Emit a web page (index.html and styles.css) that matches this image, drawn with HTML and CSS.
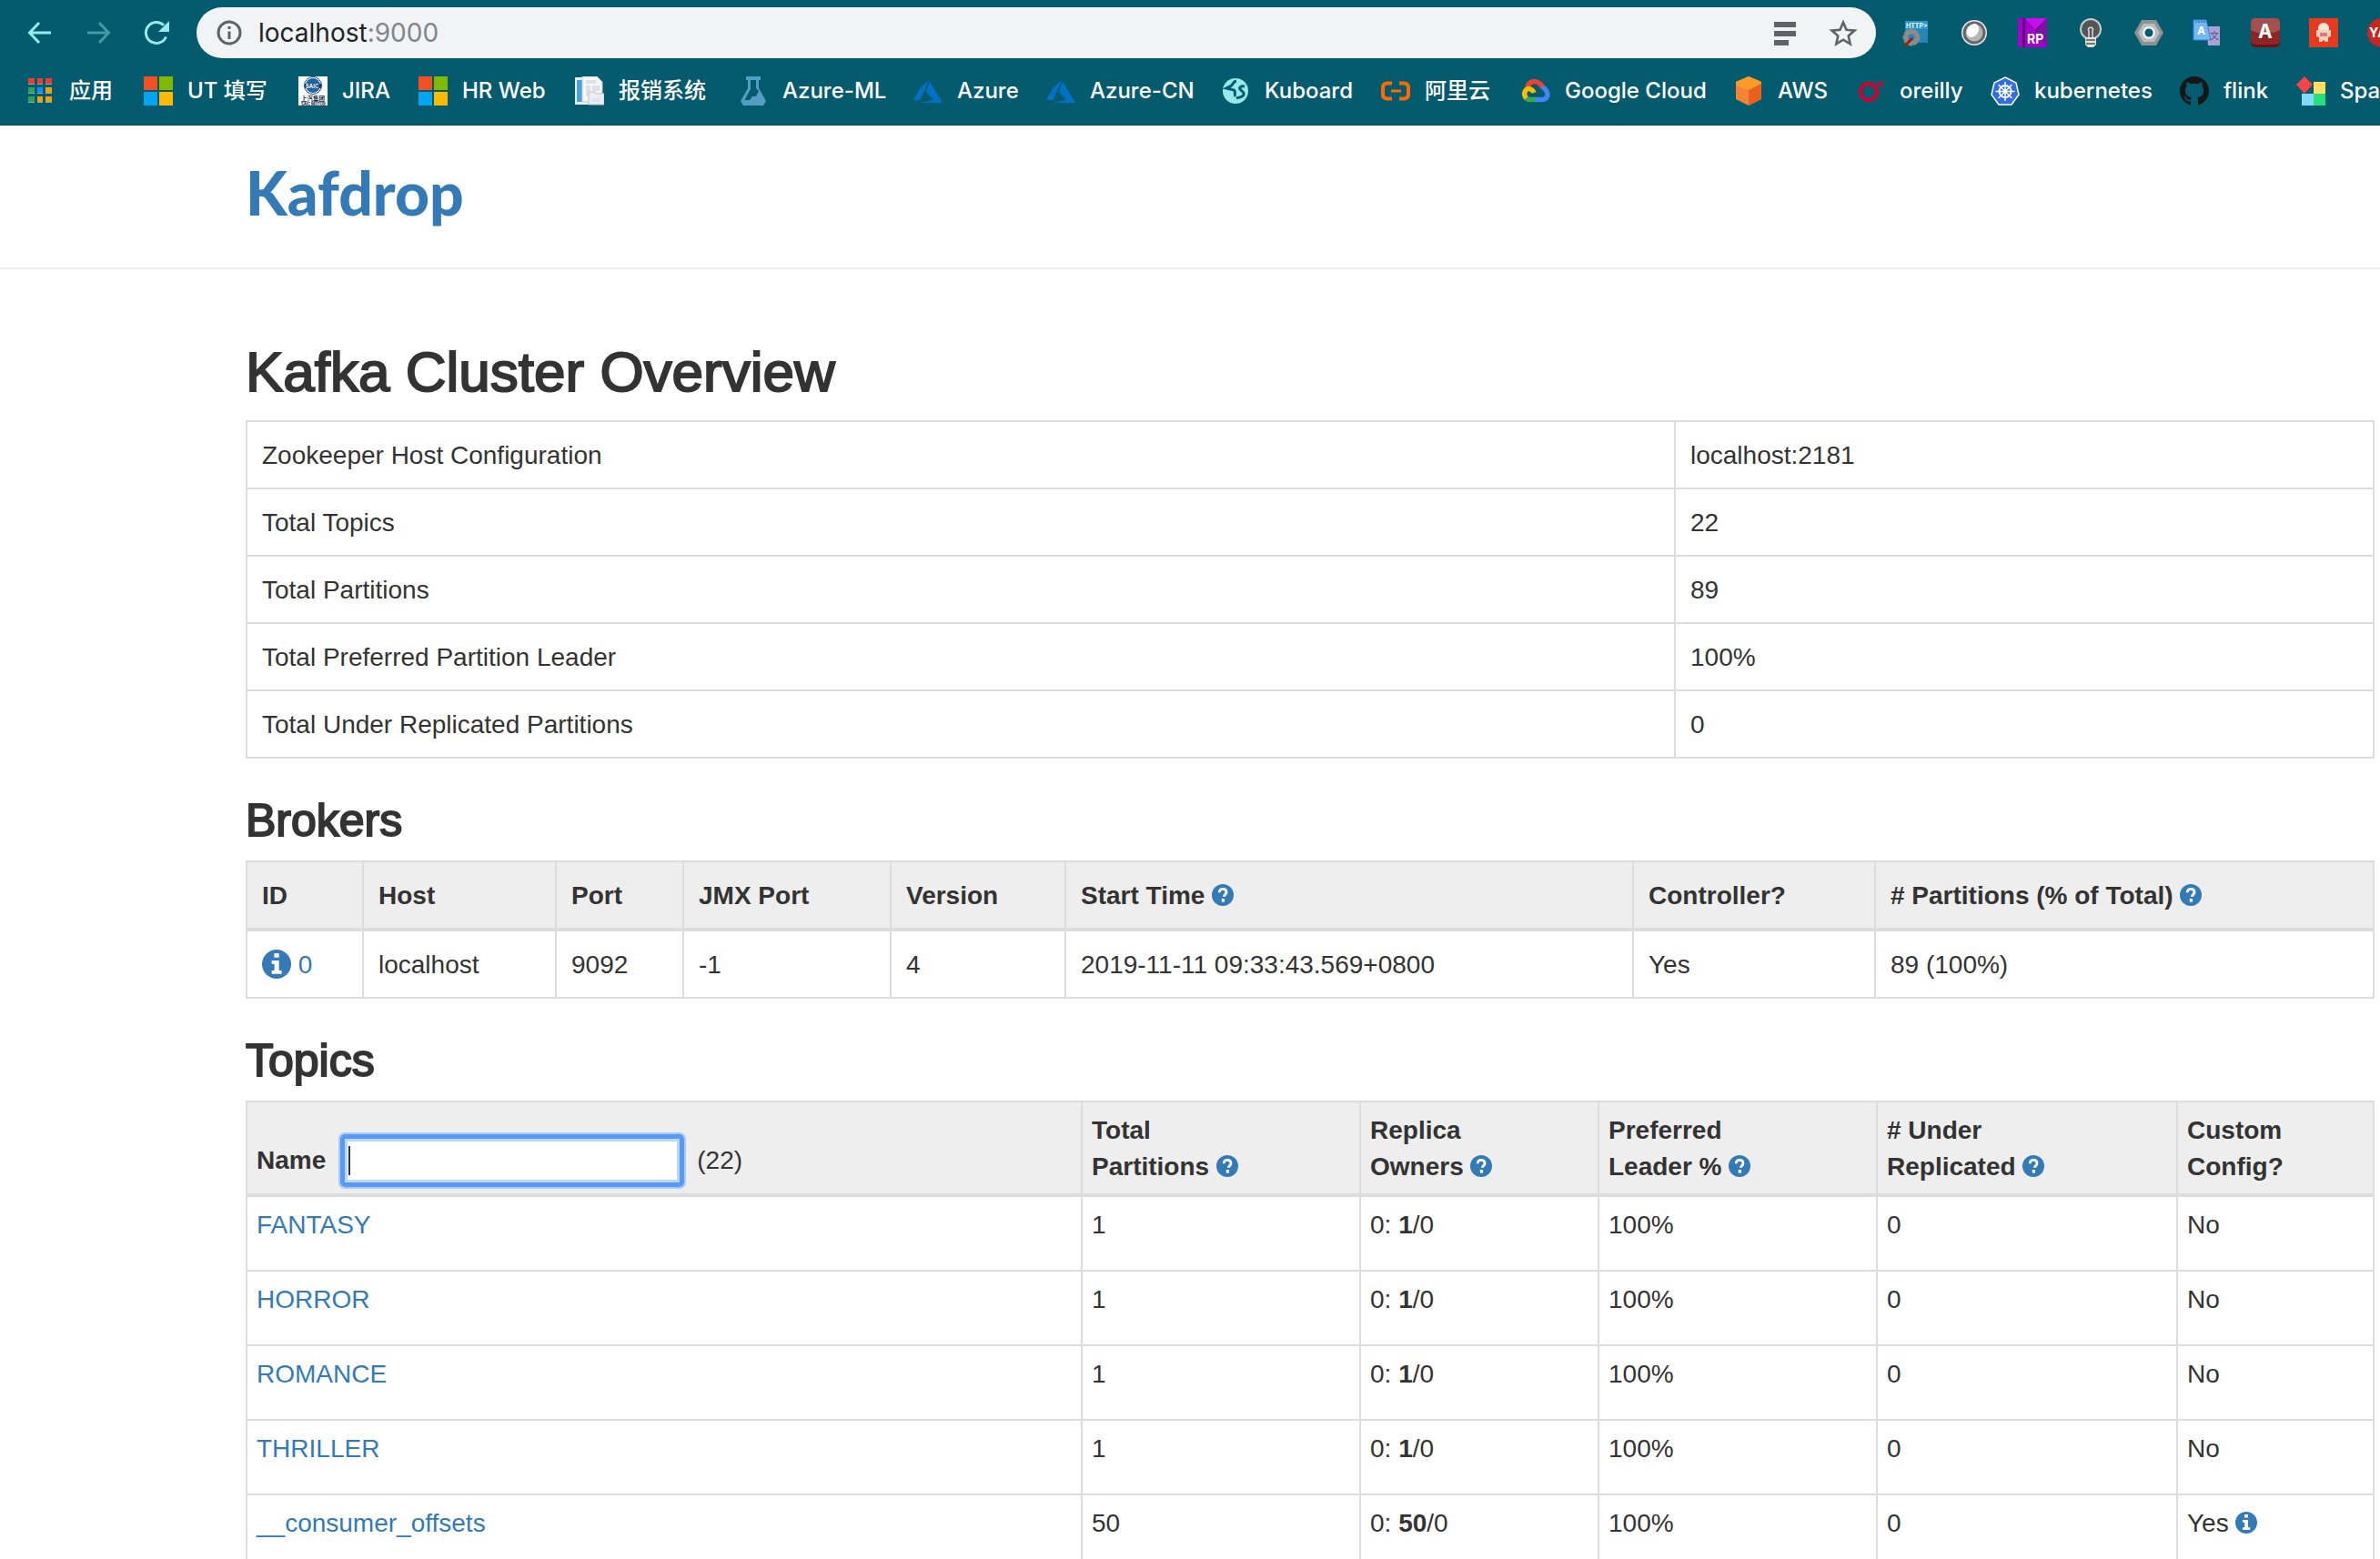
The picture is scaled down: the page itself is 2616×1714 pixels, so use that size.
FILE: index.html
```html
<!DOCTYPE html>
<html lang="en">
<head>
<meta charset="utf-8">
<title>Kafdrop: Broker List</title>
<link rel="stylesheet" href="styles.css">
</head>
<body>
<svg class="defs" aria-hidden="true">
  <symbol id="question" viewBox="0 0 24 24">
    <circle cx="12" cy="12" r="12" fill="#337ab7"/>
    <path d="M8.2 9.2C8.2 6.6 9.8 5.4 12 5.4s4 1.3 4 3.5c0 2.700-2.600 2.700-2.600 4.900" fill="none" stroke="#fff" stroke-width="2.800"/>
    <rect x="10.800" y="16" width="3.200" height="3.600" fill="#fff"/>
  </symbol>
  <symbol id="info" viewBox="0 0 24 24">
    <circle cx="12" cy="12" r="12" fill="#337ab7"/>
    <path d="M10 3h4v3.600h-4zM8 9h6v8.200h2.200V20H8v-2.800h2.200v-5.400H8z" fill="#fff"/>
  </symbol>
  <symbol id="microsoft" viewBox="0 0 32 32">
    <path d="M0 0h15v15H0z" fill="#f25022"/><path d="M17 0h15v15H17z" fill="#7fba00"/>
    <path d="M0 17h15v15H0z" fill="#00a4ef"/><path d="M17 17h15v15H17z" fill="#ffb900"/>
  </symbol>
  <symbol id="azure" viewBox="0 0 32 32">
    <path d="M17 4L8 12 0 26h7.500z" fill="#0072c6"/><path d="M18 5.500L14 17l8 9-14.500 3H32z" fill="#0072c6"/>
  </symbol>
</svg>

<header class="chrome">
  <div class="toolbar">
    <nav class="history" aria-label="History">
      <button class="tool" aria-label="Back"><svg viewBox="0 0 32 32"><path d="M28 16H5M15 5L4.500 16 15 27" fill="none" stroke="#98eaea" stroke-width="3"/></svg></button>
      <button class="tool" aria-label="Forward"><svg viewBox="0 0 32 32"><path d="M4 16h23M17 5l10.500 11L17 27" fill="none" stroke="#459aa3" stroke-width="3"/></svg></button>
      <button class="tool" aria-label="Reload"><svg viewBox="0 0 32 32"><path d="M26.500 20.500A11.500 11.500 0 1 1 24 7.800" fill="none" stroke="#98eaea" stroke-width="3"/><path d="M30 3v12H18z" fill="#98eaea"/></svg></button>
    </nav>
    <div class="omnibox">
      <svg class="site-info" viewBox="0 0 28 28"><circle cx="14" cy="14" r="12" fill="none" stroke="#5f6368" stroke-width="3"/><path d="M12.500 7h3v3h-3zM12.500 12.500h3V21h-3z" fill="#5f6368"/></svg>
      <div class="url" role="textbox" aria-label="Address"><span>localhost</span><span class="port">:9000</span></div>
      <button class="tool" aria-label="Reading mode"><svg viewBox="0 0 32 32"><path d="M4 4h24v6H4zM4 14h24v6H4zM4 24h16v6H4z" fill="#5f6368"/></svg></button>
      <button class="tool" aria-label="Bookmark this page"><svg viewBox="0 0 32 32"><path d="M16 4.500l3.500 8.300 9 .8-6.800 5.900 2 8.800-7.700-4.600-7.700 4.600 2-8.800-6.800-5.900 9-.8z" fill="none" stroke="#5f6368" stroke-width="2.600"/></svg></button>
    </div>
    <div class="extensions">
      <button class="tool" aria-label="HTTP headers"><svg viewBox="0 0 32 32"><path d="M4 3h25v24H4z" fill="#2386b5"/><path d="M4 3h25v9H4z" fill="#2b99cc"/><text x="5" y="11" font-size="7" font-weight="600" fill="#fff">HTTP&gt;</text><circle cx="11" cy="21" r="7" fill="none" stroke="#8b8b8b" stroke-width="5" stroke-dasharray="4 1"/><circle cx="11" cy="21" r="6" fill="none" stroke="#8b8b8b" stroke-width="5"/><path d="M3 31l9-9" stroke="#a51f10" stroke-width="3"/><path d="M2 30l2 2" stroke="#165b20" stroke-width="3"/></svg></button>
      <button class="tool" aria-label="Sphere"><svg viewBox="0 0 32 32"><circle cx="16" cy="16" r="14" fill="#e8e8e8"/><circle cx="16" cy="16" r="12.500" fill="#666"/><circle cx="16" cy="16" r="9.500" fill="#b5b5b5"/><ellipse cx="14.500" cy="13.500" rx="6" ry="8" fill="#fff" transform="rotate(35 14.500 13.500)"/></svg></button>
      <button class="tool" aria-label="Axure RP"><svg viewBox="0 0 32 32"><path d="M0 0h32v32H0z" fill="#a000c8"/><path d="M8 0h24L19 13z" fill="#c510ec"/><path d="M32 0v32L18 13z" fill="#7d12a0"/><path d="M5 0h3v32H5z" fill="#60007c"/><text x="10" y="28" font-size="14" font-weight="700" fill="#fff">RP</text></svg></button>
      <button class="tool" aria-label="Lamp"><svg viewBox="0 0 32 32"><circle cx="16" cy="12" r="11" fill="#555" stroke="#c4cbc8" stroke-width="2"/><path d="M14 22v-8c-3-5 7-5 4 0v8" fill="none" stroke="#ddd" stroke-width="1.500"/><path d="M10 21h12v8l-3 3h-6l-3-3z" fill="#e3e3dc"/><path d="M11 24h10M11 28h10" stroke="#555" stroke-width="1.500"/></svg></button>
      <button class="tool" aria-label="Nut"><svg viewBox="0 0 32 32"><path d="M8 2h16l8 14-8 14H8L0 16z" fill="#8d9294"/><path d="M10 6h12l6 10-6 10H10L4 16z" fill="#b9bdbe"/><circle cx="16" cy="16" r="7" fill="#eee"/><circle cx="16" cy="16" r="4.500" fill="#045b6d"/></svg></button>
      <button class="tool" aria-label="Translate"><svg viewBox="0 0 32 32"><path d="M15 9h15v21H17z" fill="#a9a2d4"/><path d="M1 2h14l5 22H1z" fill="#72b8f2" stroke="#3c82cf"/><path d="M3 4h11" stroke="#3c82cf" stroke-width="2" stroke-dasharray="2 1"/><text x="5" y="18" font-size="12" font-weight="700" fill="#fff">A</text><text class="cjk" x="19" y="23" font-size="10" fill="#5b4a91">文</text></svg></button>
      <button class="tool" aria-label="A"><svg viewBox="0 0 32 32"><rect width="32" height="32" rx="5" fill="#6d1212"/><rect width="32" height="29" rx="5" fill="#8c2626"/><path d="M5 0h22q5 0 5 5v8q-16 8-32 0V5q0-5 5-5z" fill="#a55050"/><text x="8" y="22" font-size="21" font-weight="700" fill="#fff">A</text></svg></button>
      <button class="tool" aria-label="Octopus"><svg viewBox="0 0 32 32"><path d="M0 0h32v32H0z" fill="#e53a1e"/><circle cx="16" cy="11" r="6" fill="#fbe6d4"/><path d="M8 13h16v7l-3 1v5h-3l-2-2-2 2h-3v-5l-3-1z" fill="#f7d0bb"/><path d="M12 16h8v4h-8z" fill="#d27d86"/></svg></button>
      <button class="tool" aria-label="YApi"><svg viewBox="0 0 32 32"><circle cx="16" cy="16" r="16" fill="#c4271f"/><text x="2" y="21" font-size="14" font-weight="700" fill="#fff">YA</text></svg></button>
    </div>
  </div>

  <nav class="bookmarks" aria-label="Bookmarks">
    <a class="bookmark" href="#"><svg viewBox="0 0 32 32"><path d="M3 2h7v6H3zM13 2h6v6h-6zM22 2h7v6h-7z" fill="#f23b30"/><path d="M3 12h7v6H3zM3 22h7v6H3z" fill="#31a05a"/><path d="M13 12h6v6h-6z" fill="#1c88f5"/><path d="M22 12h7v6h-7zM13 22h6v6h-6zM22 22h7v6h-7z" fill="#f2a20c"/><path d="M3 8.500h7m3 0h6m3 0h7M3 18.500h7m3 0h6m3 0h7M3 28.500h7m3 0h6m3 0h7" stroke="#7bb3a9"/></svg>应用</a>
    <a class="bookmark" href="#"><svg viewBox="0 0 32 32"><use href="#microsoft"/></svg>UT 填写</a>
    <a class="bookmark" href="#"><svg viewBox="0 0 32 32"><path d="M0 0h32v32H0z" fill="#fff"/><circle cx="16" cy="10" r="9.500" fill="#fff" stroke="#154476"/><circle cx="16" cy="10" r="8" fill="#1d66a4"/><path d="M7 8h18v5H7z" fill="#123f77"/><text x="8" y="13" font-size="6" font-weight="700" fill="#fff">SAIC</text><text class="cjk" x="3" y="27" font-size="6.500" font-weight="700" fill="#13294b">上汽集团</text><text x="3" y="32" font-size="4.200" font-weight="700" fill="#13294b">SAIC MOTOR</text></svg>JIRA</a>
    <a class="bookmark" href="#"><svg viewBox="0 0 32 32"><use href="#microsoft"/></svg>HR Web</a>
    <a class="bookmark" href="#"><svg viewBox="0 0 32 32"><path d="M0 1h18v30H0z" fill="#e9eef2"/><path d="M2 4h8v24H2z" fill="#4c9fd6"/><path d="M8 0h16l6 6v22H8z" fill="#f7f7f7" stroke="#c5cbd0"/><path d="M12 4h11v4H12zM12 10h5v12h-5zM19 10h8v6h-8z" fill="#dde2e8"/><path d="M15 17h7l1 2h9v12H15z" fill="#eceef1" stroke="#bfc4c9"/><path d="M19 24h8v4h-8z" fill="#dbe2f0"/></svg>报销系统</a>
    <a class="bookmark" href="#"><svg viewBox="0 0 32 32"><path d="M8 0h16v4h-2v9l8 14-3 5H5l-3-5 8-14V4H8zM13 4v10L6.500 26H12l3-4h4l3-6-3-3V4z" fill="#549dc2" fill-rule="evenodd"/></svg>Azure-ML</a>
    <a class="bookmark" href="#"><svg viewBox="0 0 32 32"><use href="#azure"/></svg>Azure</a>
    <a class="bookmark" href="#"><svg viewBox="0 0 32 32"><use href="#azure"/></svg>Azure-CN</a>
    <a class="bookmark" href="#"><svg viewBox="0 0 32 32"><circle cx="16" cy="16" r="14" fill="#98eaea"/><path d="M17 5c-5 1-3 5-7 6l-4 2 8 2c3 1 0 5 2 7M26 11c-4-1-6 1-5 3s5 3 4 6-5 3-8 4" fill="none" stroke="#045b6d" stroke-width="3"/></svg>Kuboard</a>
    <a class="bookmark" href="#"><svg viewBox="0 0 32 32"><path d="M12 7.500H6.500Q2 8 2 12v8q0 4 4.500 4.500H12M20 7.500h5.500Q30 8 30 12v8q0 4-4.500 4.500H20" fill="none" stroke="#ff6a00" stroke-width="4"/><path d="M11 14.500h11v3H11z" fill="#ff6a00"/></svg>阿里云</a>
    <a class="bookmark" href="#"><svg viewBox="0 0 32 32" fill="none" stroke-width="5.500"><path d="M7 12C8 6 14 4 19 7q4 2 5 6" stroke="#ea4335"/><path d="M24 11c1 3 5 4 5 8 0 5-3 6.500-6 6.500h-7" stroke="#4285f4"/><path d="M16 25.500h-6q-3 0-5-2" stroke="#34a853"/><path d="M5.500 24C1 18 6 12 10 14q3 1 4 4" stroke="#fbbc05"/></svg>Google Cloud</a>
    <a class="bookmark" href="#"><svg viewBox="0 0 32 32"><path d="M16 0l14 6v19l-14 7L2 25V6z" fill="#f58536"/><path d="M16 0l14 6-1 4-13 5L3 10 2 6z" fill="#fc9a29"/><path d="M16 15l14-7v17l-14 7z" fill="#e9601f"/></svg>AWS</a>
    <a class="bookmark" href="#"><svg viewBox="0 0 32 32"><circle cx="14" cy="17" r="9" fill="none" stroke="#d3002d" stroke-width="4"/><circle cx="27" cy="8" r="2.800" fill="#d3002d"/></svg>oreilly</a>
    <a class="bookmark" href="#"><svg viewBox="0 0 32 32"><path d="M16 1l12 6 3 13-8 11H9L1 20 4 7z" fill="#326ce5" stroke="#fff" stroke-width="1.500"/><g stroke="#fff" fill="none"><circle cx="16" cy="16.500" r="6.500" stroke-width="2"/><path d="M16 6v21M5.500 16.500h21M8.500 9l15 15M23.500 9l-15 15" stroke-width="1.500"/></g><circle cx="16" cy="16.500" r="2" fill="#fff"/></svg>kubernetes</a>
    <a class="bookmark" href="#"><svg viewBox="0 0 16 16"><path d="M8 0C3.580 0 0 3.580 0 8c0 3.540 2.290 6.530 5.470 7.590.4.070.55-.17.55-.38 0-.19-.01-.82-.01-1.490-2.010.37-2.530-.49-2.690-.94-.09-.23-.48-.94-.82-1.130-.28-.15-.68-.52-.01-.53.63-.01 1.080.58 1.230.82.72 1.210 1.870.87 2.330.66.070-.52.280-.87.510-1.070-1.780-.2-3.640-.89-3.640-3.950 0-.87.310-1.590.82-2.150-.08-.2-.36-1.020.08-2.120 0 0 .67-.21 2.200.82.64-.18 1.320-.27 2-.27s1.360.09 2 .27c1.530-1.040 2.200-.82 2.200-.82.440 1.100.160 1.920.080 2.120.510.560.820 1.270.820 2.150 0 3.070-1.870 3.750-3.650 3.950.290.250.540.730.540 1.480 0 1.070-.01 1.930-.01 2.200 0 .210.150.460.550.380A8.010 8.010 0 0 0 16 8c0-4.420-3.580-8-8-8z" fill="#171515"/></svg>flink</a>
    <a class="bookmark" href="#"><svg viewBox="0 0 32 32"><path d="M9 0l9 9-9 10L0 9z" fill="#f64344"/><path d="M19 6h13v13H19z" fill="#ffe063"/><path d="M6 19h13v13H6z" fill="#81dbfb"/><path d="M19 19h13v13H19z" fill="#28df7d"/></svg>Spa</a>
  </nav>
</header>

<div class="site-header">
  <a class="brand" href="#">Kafdrop</a>
</div>

<main class="container">
  <h1 class="title">Kafka Cluster Overview</h1>
  <table class="table overview">
    <colgroup><col><col class="w-value"></colgroup>
    <tbody>
      <tr><td>Zookeeper Host Configuration</td><td>localhost:2181</td></tr>
      <tr><td>Total Topics</td><td>22</td></tr>
      <tr><td>Total Partitions</td><td>89</td></tr>
      <tr><td>Total Preferred Partition Leader</td><td>100%</td></tr>
      <tr><td>Total Under Replicated Partitions</td><td>0</td></tr>
    </tbody>
  </table>

  <h2 class="subtitle">Brokers</h2>
  <table class="table brokers">
    <colgroup><col class="w-id"><col class="w-host"><col class="w-port"><col class="w-jmx"><col class="w-version"><col><col class="w-controller"><col class="w-share"></colgroup>
    <thead>
      <tr><th>ID</th><th>Host</th><th>Port</th><th>JMX Port</th><th>Version</th><th>Start Time <svg class="hint"><use href="#question"/></svg></th><th>Controller?</th><th># Partitions (% of Total) <svg class="hint"><use href="#question"/></svg></th></tr>
    </thead>
    <tbody>
      <tr><td><a class="link" href="#"><svg class="hint hint-large"><use href="#info"/></svg> 0</a></td><td>localhost</td><td>9092</td><td>-1</td><td>4</td><td>2019-11-11 09:33:43.569+0800</td><td>Yes</td><td>89 (100%)</td></tr>
    </tbody>
  </table>

  <h2 class="subtitle">Topics</h2>
  <table class="table topics">
    <colgroup><col><col class="w-partitions"><col class="w-owners"><col class="w-leader"><col class="w-under"><col class="w-custom"></colgroup>
    <thead>
      <tr>
        <th><div class="filter-row"><label for="filter">Name</label><input class="filter" id="filter" type="text"><span class="count">(22)</span></div></th>
        <th>Total<br>Partitions <svg class="hint"><use href="#question"/></svg></th>
        <th>Replica<br>Owners <svg class="hint"><use href="#question"/></svg></th>
        <th>Preferred<br>Leader % <svg class="hint"><use href="#question"/></svg></th>
        <th># Under<br>Replicated <svg class="hint"><use href="#question"/></svg></th>
        <th>Custom<br>Config?</th>
      </tr>
    </thead>
    <tbody>
      <tr><td><a class="link" href="#">FANTASY</a></td><td>1</td><td>0: <b>1</b>/0</td><td>100%</td><td>0</td><td>No</td></tr>
      <tr><td><a class="link" href="#">HORROR</a></td><td>1</td><td>0: <b>1</b>/0</td><td>100%</td><td>0</td><td>No</td></tr>
      <tr><td><a class="link" href="#">ROMANCE</a></td><td>1</td><td>0: <b>1</b>/0</td><td>100%</td><td>0</td><td>No</td></tr>
      <tr><td><a class="link" href="#">THRILLER</a></td><td>1</td><td>0: <b>1</b>/0</td><td>100%</td><td>0</td><td>No</td></tr>
      <tr><td><a class="link" href="#">__consumer_offsets</a></td><td>50</td><td>0: <b>50</b>/0</td><td>100%</td><td>0</td><td>Yes <svg class="hint"><use href="#info"/></svg></td></tr>
    </tbody>
  </table>
</main>
</body>
</html>
```
FILE: styles.css
```css
* { box-sizing: border-box; }

body {
  margin: 0;
  height: 100vh;
  overflow: hidden;
  background: #fff;
  color: #333;
  font-family: "Liberation Sans", Arial, sans-serif;
  font-size: 28px;
  line-height: 40px;
}

.defs { display: none; }

/* Browser bar */
.chrome {
  background: #045b6d;
  border-bottom: 1px solid #04414e;
  font-family: Inter, "Noto Sans CJK SC", sans-serif;
}

.toolbar {
  display: flex;
  align-items: center;
  gap: 28px;
  padding: 8px 0 8px 28px;
}

.history {
  display: flex;
  gap: 32px;
}

.tool {
  flex: none;
  width: 32px;
  height: 32px;
  padding: 0;
  border: 0;
  background: none;
  font-family: inherit;
}

.tool svg { display: block; width: 32px; height: 32px; }

.cjk { font-family: "Noto Sans CJK SC", sans-serif; }

.omnibox {
  flex: 1;
  display: flex;
  align-items: center;
  gap: 32px;
  height: 56px;
  padding: 0 20px 0 22px;
  border-radius: 28px;
  background: #f1f3f4;
}

.site-info { width: 28px; height: 28px; margin-right: -14px; }

.url {
  flex: 1;
  color: #202124;
  font-size: 28px;
  line-height: 40px;
}

.port { color: #80868b; }

.extensions {
  flex: 0 0 526px;
  display: flex;
  gap: 32px;
  overflow: hidden;
}

.bookmarks {
  display: grid;
  grid-template-columns: 98px 138px 100px 140px 148px 160px 114px 160px 144px 122px 202px 102px 116px 176px 96px auto;
  align-items: center;
  gap: 32px;
  height: 65px;
  padding: 0 0 9px 28px;
  overflow: hidden;
}

.bookmark {
  display: flex;
  align-items: center;
  gap: 16px;
  color: #fff;
  font-size: 24px;
  font-weight: 500;
  line-height: 32px;
  text-decoration: none;
  white-space: nowrap;
}

.bookmark svg { flex: none; width: 32px; height: 32px; }

/* Page header */
.site-header {
  padding: 34px 6px 42px 270px;
  border-bottom: 2px solid #eee;
}

.brand {
  display: block;
  color: #337ab7;
  font-family: Lato, sans-serif;
  font-size: 66px;
  font-weight: 900;
  line-height: 80px;
  text-decoration: none;
}

/* Content */
.container { padding: 80px 6px 0 270px; }

.title,
.subtitle {
  font-weight: 400;
  -webkit-text-stroke: 2px #333;
}

.title {
  margin: 0 0 20px;
  font-size: 62px;
  line-height: 66px;
}

.subtitle {
  margin: 42px 0 18px;
  font-size: 50px;
  line-height: 52px;
}

.table {
  width: 100%;
  table-layout: fixed;
  border-collapse: collapse;
}

.table th,
.table td {
  padding: 17px 16px 15px;
  border: 2px solid #ddd;
  text-align: left;
  vertical-align: top;
}

.table th { background: #eee; border-bottom-width: 4px; }

.topics th { padding: 11px 10px 9px; }
.topics td { padding: 11px 10px 29px; }
.topics th:first-child { vertical-align: bottom; padding-bottom: 7px; }

.w-value { width: 768px; }
.w-id { width: 128px; }
.w-host { width: 212px; }
.w-port { width: 140px; }
.w-jmx { width: 228px; }
.w-version { width: 192px; }
.w-controller { width: 266px; }
.w-share { width: 548px; }
.w-partitions { width: 306px; }
.w-owners { width: 262px; }
.w-leader { width: 306px; }
.w-under { width: 330px; }
.w-custom { width: 216px; }

.link { color: #337ab7; text-decoration: none; }

.hint {
  width: 24px;
  height: 24px;
  vertical-align: -2px;
}

.hint-large {
  width: 32px;
  height: 32px;
  vertical-align: -6px;
}

.filter-row {
  display: flex;
  align-items: center;
  gap: 14px;
}

.filter {
  width: 378px;
  height: 58px;
  margin-left: 2px;
  padding: 0 8px;
  border: 5px solid #589bf5;
  border-radius: 5px;
  outline: 2px solid #aac9f4;
  background: #fff linear-gradient(#333, #333) 4px 50% / 2px 32px no-repeat;
  box-shadow: inset 0 0 0 3px #b9d6fb;
  font: inherit;
}

.count { font-weight: 400; }
```
